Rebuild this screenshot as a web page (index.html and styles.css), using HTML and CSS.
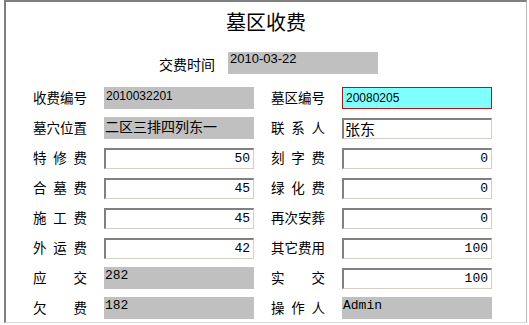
FILE: index.html
```html
<!DOCTYPE html>
<html lang="zh">

<head>
    <meta charset="UTF-8">
    <title>墓区收费</title>
    <link rel="stylesheet" href="styles.css">
</head>

<body>
    <div class="panel">
        <h1 class="title">墓区收费</h1>
        <div class="date-row">
            <span class="label wide">交费时间</span>
            <div class="field ro num">2010-03-22</div>
        </div>
        <div class="grid">
            <span class="label">收费编号</span>
            <div class="field ro sans">2010032201</div>
            <span class="label">墓区编号</span>
            <input type="text" class="box active" value="20080205">

            <span class="label">墓穴位置</span>
            <div class="field ro cn">二区三排四列东一</div>
            <span class="label">联系人</span>
            <input type="text" class="box cn" value="张东">

            <span class="label">特修费</span>
            <input type="text" class="box money" value="50">
            <span class="label">刻字费</span>
            <input type="text" class="box money" value="0">

            <span class="label">合墓费</span>
            <input type="text" class="box money" value="45">
            <span class="label">绿化费</span>
            <input type="text" class="box money" value="0">

            <span class="label">施工费</span>
            <input type="text" class="box money" value="45">
            <span class="label">再次安葬</span>
            <input type="text" class="box money" value="0">

            <span class="label">外运费</span>
            <input type="text" class="box money" value="42">
            <span class="label">其它费用</span>
            <input type="text" class="box money" value="100">

            <span class="label">应交</span>
            <div class="field ro mono">282</div>
            <span class="label">实交</span>
            <input type="text" class="box money" value="100">

            <span class="label">欠费</span>
            <div class="field ro mono">182</div>
            <span class="label">操作人</span>
            <div class="field ro mono">Admin</div>
        </div>
    </div>
</body>

</html>
```

FILE: styles.css
```css
body {
    margin: 0;
    background: #fff;
    font-family: "Noto Sans CJK SC", sans-serif;
    color: #000;
}

.panel {
    width: 523px;
    height: 323px;
    margin: 0 0 0 4px;
    border-top: 2px solid #7f7f7f;
    border-left: 2px solid #7f7f7f;
    border-right: 1px solid #b8b8b8;
    border-bottom: 1px solid #d8d8d8;
    box-sizing: border-box;
}

.title {
    margin: 0;
    padding-top: 7px;
    height: 36px;
    box-sizing: border-box;
    font-size: 20px;
    font-weight: normal;
    line-height: 26px;
    text-align: center;
}

.date-row {
    display: flex;
    align-items: center;
    gap: 13px;
    margin-top: 14px;
    padding-left: 153px;
}

.label {
    width: 54px;
    padding-bottom: 2px;
    font-size: 13.5px;
    line-height: 16px;
    text-align: justify;
    text-align-last: justify;
    white-space: nowrap;
}

.label.wide {
    width: 56px;
    padding-bottom: 0;
    padding-top: 1px;
    font-size: 14px;
}

.grid {
    display: grid;
    grid-template-columns: 54px 150px 54px 150px;
    grid-auto-rows: 22px;
    column-gap: 17px;
    row-gap: 8px;
    align-items: center;
    margin-top: 13px;
    padding-left: 27px;
}

.field {
    height: 22px;
    box-sizing: border-box;
}

.ro {
    width: 150px;
    background: #c0c0c0;
    padding: 2px 2px 0;
    font-size: 12px;
    line-height: 14px;
    overflow: hidden;
    white-space: nowrap;
}

.num {
    font-family: "Liberation Sans", sans-serif;
    font-size: 13px;
    padding-top: 0;
}

.sans {
    font-family: "Liberation Sans", sans-serif;
}

.mono {
    font-family: "Liberation Mono", monospace;
    font-size: 13px;
    padding-left: 1px;
}

.ro.cn {
    font-size: 14px;
    line-height: 16px;
    padding-top: 1px;
    padding-left: 1px;
}

.box {
    width: 150px;
    height: 21px;
    margin: 0;
    padding: 0 3px 0 2px;
    box-sizing: border-box;
    border-top: 2px solid #808080;
    border-left: 2px solid #808080;
    border-right: 1px solid #d4d0c8;
    border-bottom: 1px solid #d4d0c8;
    background: #fff;
    outline: none;
    color: #000;
}

.box.money {
    font-family: "Liberation Mono", monospace;
    font-size: 13px;
    text-align: right;
}

.box.cn {
    font-family: "Noto Sans CJK SC", sans-serif;
    font-size: 15px;
    padding-left: 1px;
}

.box.active {
    height: 22px;
    border: 1px solid #b01818;
    background: #80ffff;
    font-family: "Liberation Sans", sans-serif;
    font-size: 12px;
    padding-left: 3px;
}
```
